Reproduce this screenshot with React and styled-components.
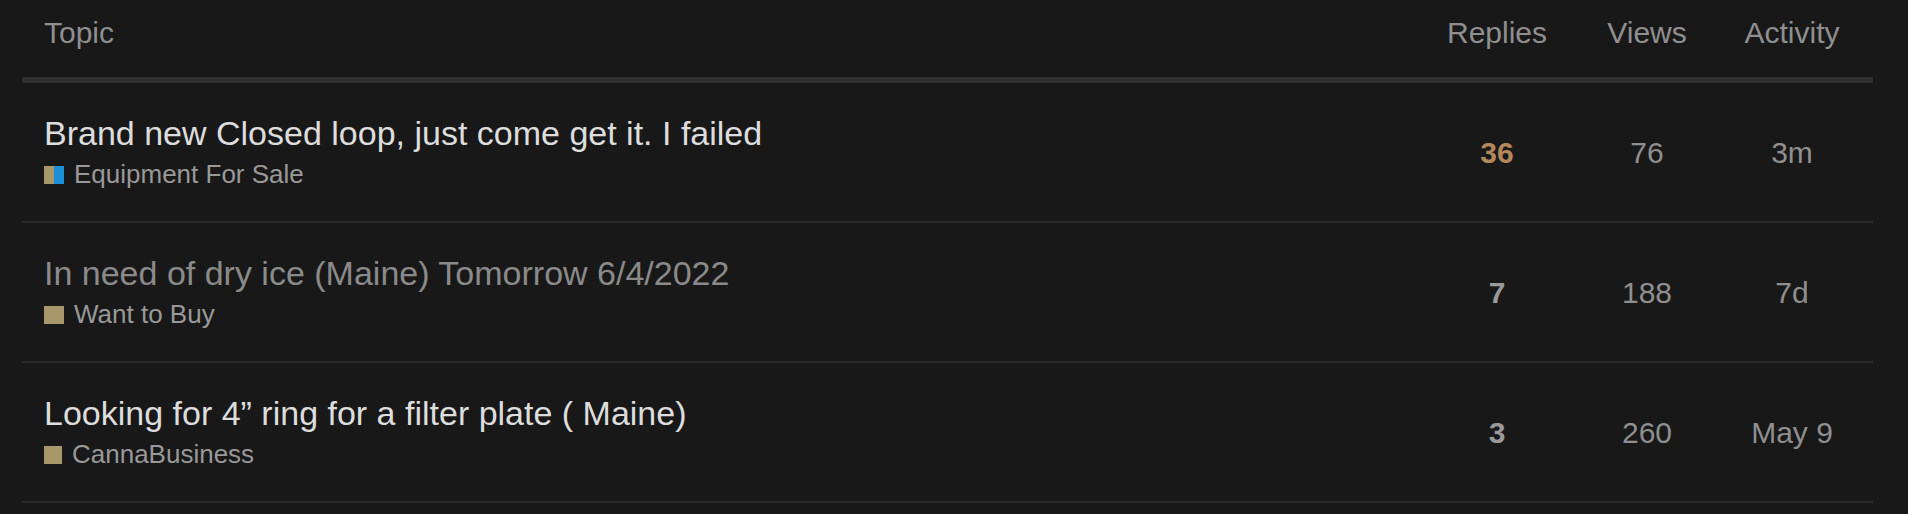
import React from 'react'
import styled, { createGlobalStyle } from 'styled-components'

const bg = '#181818'
const bright = '#dddddd'
const muted = '#8f8f8f'
const visited = '#8a8a8a'
const line = '#2c2c2c'
const heat = '#b3875c'

const GlobalStyle = createGlobalStyle`
  html, body {
    margin: 0;
    padding: 0;
    background: ${bg};
  }
  body {
    font-family: "Liberation Sans", Arial, Helvetica, sans-serif;
    -webkit-font-smoothing: antialiased;
  }
`

const Page = styled.div`
  padding: 0 35px 0 22px;
  min-height: 514px;
  background: ${bg};
`

const Columns = styled.div`
  display: grid;
  grid-template-columns: 1fr 172px 128px 162px;
  align-items: center;
`

const HeadRow = styled(Columns)`
  border-bottom: 6px solid #2f2f2f;
`

const HeadCell = styled.div`
  padding: 15px ${p => (p.left ? '22px' : '0')} 26px;
  font-size: 30px;
  line-height: 36px;
  color: ${muted};
  text-align: ${p => (p.left ? 'left' : 'center')};
`

const Row = styled(Columns)`
  border-bottom: 2px solid ${line};
`

const TopicCell = styled.div`
  padding: 30px 22px 31px;
`

const Title = styled.div`
  font-size: 34px;
  line-height: 40px;
  color: ${p => (p.seen ? visited : bright)};
  white-space: nowrap;
`

const Category = styled.div`
  display: flex;
  align-items: center;
  margin-top: 5px;
  font-size: 26px;
  line-height: 32px;
  color: #999999;
`

const Swatch = styled.span`
  display: flex;
  width: ${p => p.w}px;
  height: 18px;
  margin-right: 10px;
  margin-top: 1px;
`

const SwatchPart = styled.span`
  flex: 1;
  background: ${p => p.color};
`

const NumCell = styled.div`
  padding-top: 2px;
  text-align: center;
  font-size: 30px;
  line-height: 36px;
  color: ${p => (p.hot ? heat : p.bold ? '#9a9a9a' : muted)};
  font-weight: ${p => (p.bold ? 700 : 400)};
`

const topics = [
  {
    title: 'Brand new Closed loop, just come get it. I failed',
    category: 'Equipment For Sale',
    colors: ['#a8976b', '#1d8fd6'],
    swatch: 20,
    replies: '36',
    hot: true,
    views: '76',
    activity: '3m'
  },
  {
    title: 'In need of dry ice (Maine) Tomorrow 6/4/2022',
    seen: true,
    category: 'Want to Buy',
    colors: ['#a8976b'],
    swatch: 20,
    replies: '7',
    views: '188',
    activity: '7d'
  },
  {
    title: 'Looking for 4\u201D ring for a filter plate ( Maine)',
    category: 'CannaBusiness',
    colors: ['#a8976b'],
    swatch: 18,
    replies: '3',
    views: '260',
    activity: 'May 9'
  }
]

export default function App() {
  return (
    <Page>
      <GlobalStyle />
      <HeadRow>
        <HeadCell left>Topic</HeadCell>
        <HeadCell>Replies</HeadCell>
        <HeadCell>Views</HeadCell>
        <HeadCell>Activity</HeadCell>
      </HeadRow>
      {topics.map(t => (
        <Row key={t.title}>
          <TopicCell>
            <Title seen={t.seen}>{t.title}</Title>
            <Category>
              <Swatch w={t.swatch}>
                {t.colors.map(c => (
                  <SwatchPart key={c} color={c} />
                ))}
              </Swatch>
              {t.category}
            </Category>
          </TopicCell>
          <NumCell bold hot={t.hot}>
            {t.replies}
          </NumCell>
          <NumCell>{t.views}</NumCell>
          <NumCell>{t.activity}</NumCell>
        </Row>
      ))}
    </Page>
  )
}
